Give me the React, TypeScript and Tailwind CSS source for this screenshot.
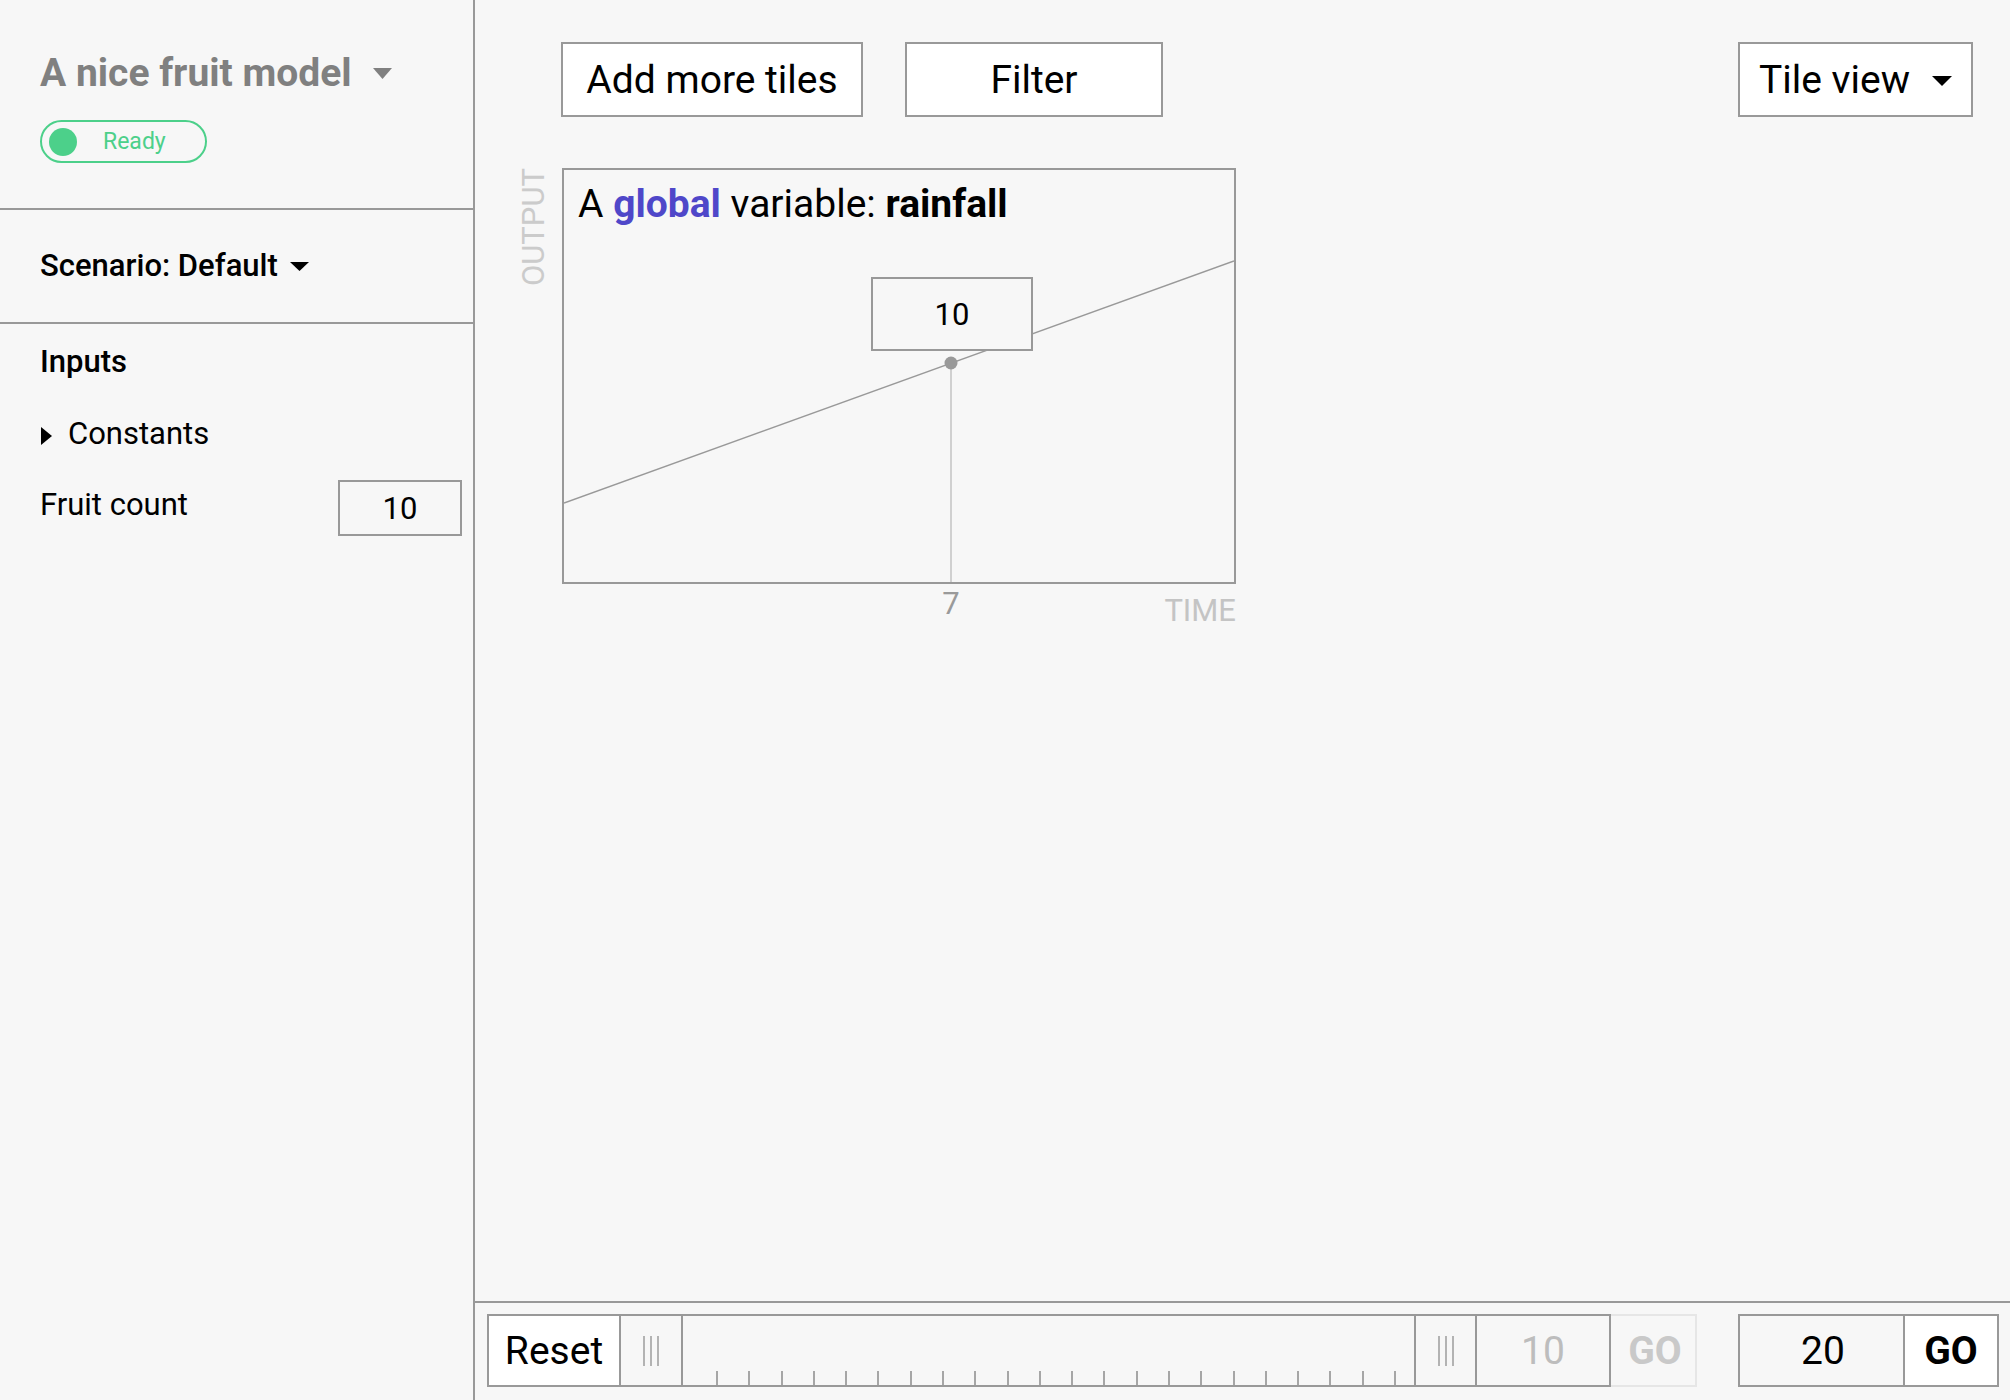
import React from "react";

function Caret({ w, h, className }: { w: number; h: number; className?: string }) {
  return (
    <svg width={w} height={h} viewBox={`0 0 ${w} ${h}`} className={className}>
      <path d={`M0 0H${w}L${w / 2} ${h}Z`} fill="currentColor" />
    </svg>
  );
}

function Grip() {
  return (
    <div className="flex gap-[5px] h-[30px]">
      <div className="w-[2px] h-full bg-[#b3b3b3]" />
      <div className="w-[2px] h-full bg-[#b3b3b3]" />
      <div className="w-[2px] h-full bg-[#b3b3b3]" />
    </div>
  );
}

export default function App() {
  const ticks = Array.from({ length: 22 }, (_, i) => i);
  return (
    <div className="flex h-[1400px] w-[2010px] overflow-hidden bg-[#f7f7f7] font-['Roboto',sans-serif] text-black">
      {/* Sidebar */}
      <aside className="w-[475px] shrink-0 border-r-2 border-[#999] flex flex-col">
        <div className="h-[210px] border-b-2 border-[#999] pt-[50px] pl-[40px]">
          <div className="flex items-center">
            <span className="text-[39px] font-bold text-[#808080] leading-[46px]">A nice fruit model</span>
            <Caret w={19} h={11} className="ml-[21px] text-[#808080]" />
          </div>
          <div className="mt-[24px] flex items-center w-[167px] h-[43px] rounded-full border-2 border-[#4cd08a] pl-[7px]">
            <div className="w-[28px] h-[28px] rounded-full bg-[#4cd08a]" />
            <span className="ml-[26px] text-[23px] text-[#4cd08a] leading-none">Ready</span>
          </div>
        </div>
        <div className="h-[114px] border-b-2 border-[#999] flex items-center pl-[40px]">
          <span className="text-[31px] font-medium leading-[36px]">Scenario: Default</span>
          <Caret w={19} h={9} className="ml-[12px] text-black" />
        </div>
        <div className="pt-[20px] pl-[40px] pr-[11px]">
          <div className="text-[31px] font-medium leading-[36px]">Inputs</div>
          <div className="mt-[36px] flex items-center h-[36px]">
            <svg width="11" height="18" viewBox="0 0 11 18" className="ml-[1px] mt-[3px]">
              <path d="M0 0L11 9L0 18Z" fill="black" />
            </svg>
            <span className="ml-[16px] text-[31px] leading-[36px]">Constants</span>
          </div>
          <div className="mt-[28px] flex items-start justify-between">
            <span className="mt-[7px] text-[31px] leading-[36px]">Fruit count</span>
            <div className="w-[124px] h-[56px] border-2 border-[#999] flex items-center justify-center pt-[3px] text-[31px]">
              10
            </div>
          </div>
        </div>
      </aside>

      {/* Main */}
      <main className="flex-1 flex flex-col min-w-0">
        <div className="flex-1">
          <div className="flex items-start pt-[42px] pl-[86px] pr-[37px]">
            <button className="w-[302px] h-[75px] border-2 border-[#999] bg-white text-[39px] flex items-center justify-center pt-[2px]">
              Add more tiles
            </button>
            <button className="ml-[42px] w-[258px] h-[75px] border-2 border-[#999] bg-white text-[39px] flex items-center justify-center pt-[2px]">
              Filter
            </button>
            <button className="ml-auto w-[235px] h-[75px] border-2 border-[#999] bg-white text-[39px] flex items-center pl-[19px] pr-[19px] pt-[2px]">
              <span>Tile view</span>
              <Caret w={20} h={10} className="ml-auto text-black" />
            </button>
          </div>

          <div className="mt-[51px] pl-[41px] flex items-start">
            <div className="w-[36px] text-[31px] leading-[36px] text-[#cbcbcb] [writing-mode:vertical-rl] rotate-180">
              OUTPUT
            </div>
            <div className="ml-[10px] relative">
              <div className="relative w-[674px] h-[416px] border-2 border-[#999]">
                <svg className="absolute inset-0" width="670" height="412" viewBox="0 0 670 412">
                  <line x1="0" y1="333" x2="670" y2="91" stroke="#999" strokeWidth="1.6" />
                  <line x1="387" y1="193" x2="387" y2="412" stroke="#c6c6c6" strokeWidth="1.6" />
                  <circle cx="387" cy="193" r="6.5" fill="#999" />
                </svg>
                <div className="relative pt-[11px] pl-[14px] text-[39px] leading-[46px]">
                  A <span className="font-bold text-[#4f47c9]">global</span> variable:{" "}
                  <span className="font-bold">rainfall</span>
                </div>
                <div className="absolute left-[307px] top-[107px] w-[162px] h-[74px] border-2 border-[#999] bg-[#f7f7f7] flex items-center justify-center pt-[2px] text-[31px]">
                  10
                </div>
              </div>
              <div className="absolute left-[389px] top-[418px] -translate-x-1/2 text-[31px] leading-[36px] text-[#9a9a9a]">
                7
              </div>
              <div className="mt-[9px] text-right text-[31px] leading-[36px] text-[#c4c4c4]">TIME</div>
            </div>
          </div>
        </div>

        {/* Bottom bar */}
        <div className="h-[99px] shrink-0 border-t-2 border-[#999] flex items-start pt-[11px] pl-[12px] pr-[11px]">
          <div className="flex h-[73px]">
            <button className="w-[134px] h-full border-2 border-[#999] bg-white text-[39px] flex items-center justify-center pt-[2px]">
              Reset
            </button>
            <div className="w-[62px] h-full border-y-2 border-r-2 border-[#999] flex items-center justify-center">
              <Grip />
            </div>
            <div className="w-[731px] h-full border-y-2 border-[#999] flex items-end justify-between pl-[33px] pr-[18px]">
              {ticks.map((t) => (
                <div key={t} className="w-[2px] h-[14px] bg-[#a6a6a6]" />
              ))}
            </div>
            <div className="w-[63px] h-full border-2 border-[#999] flex items-center justify-center">
              <Grip />
            </div>
            <div className="w-[134px] h-full border-y-2 border-r-2 border-[#999] flex items-center justify-center pt-[2px] text-[39px] text-[#bdbdbd]">
              10
            </div>
            <button className="w-[86px] h-full border-y-2 border-r-2 border-[#e6e6e6] flex items-center justify-center pt-[2px] pl-[4px] text-[39px] font-bold text-[#c9c9c9]">
              GO
            </button>
          </div>
          <div className="ml-[41px] flex h-[73px]">
            <div className="w-[167px] h-full border-2 border-[#999] flex items-center justify-center pt-[2px] pl-[3px] text-[39px]">
              20
            </div>
            <button className="w-[94px] h-full border-y-2 border-r-2 border-[#999] bg-white flex items-center justify-center pt-[2px] text-[39px] font-bold">
              GO
            </button>
          </div>
        </div>
      </main>
    </div>
  );
}
